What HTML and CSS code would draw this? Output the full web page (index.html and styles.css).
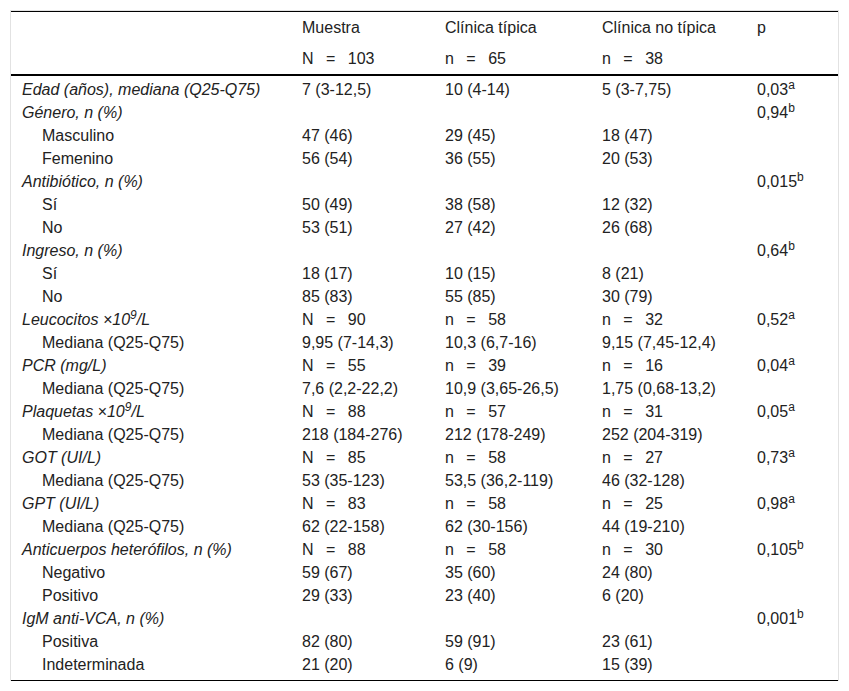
FILE: index.html
```html
<!DOCTYPE html>
<html lang="es">
<head>
<meta charset="utf-8">
<title>Tabla</title>
<link rel="stylesheet" href="styles.css">
</head>
<body>
<div class="frame">
<table class="data">
<colgroup>
<col class="c1"><col class="c2"><col class="c3"><col class="c4"><col class="c5">
</colgroup>
<thead>
<tr class="h1"><th></th><th>Muestra</th><th>Clínica típica</th><th>Clínica no típica</th><th>p</th></tr>
<tr class="h2"><th></th><th class="eq">N = 103</th><th class="eq">n = 65</th><th class="eq">n = 38</th><th></th></tr>
</thead>
<tbody>
<tr><td class="lab">Edad (años), mediana (Q25-Q75)</td><td>7 (3-12,5)</td><td>10 (4-14)</td><td>5 (3-7,75)</td><td>0,03<sup>a</sup></td></tr>
<tr><td class="lab">Género, n (%)</td><td></td><td></td><td></td><td>0,94<sup>b</sup></td></tr>
<tr><td class="sub">Masculino</td><td>47 (46)</td><td>29 (45)</td><td>18 (47)</td><td></td></tr>
<tr><td class="sub">Femenino</td><td>56 (54)</td><td>36 (55)</td><td>20 (53)</td><td></td></tr>
<tr><td class="lab">Antibiótico, n (%)</td><td></td><td></td><td></td><td>0,015<sup>b</sup></td></tr>
<tr><td class="sub">Sí</td><td>50 (49)</td><td>38 (58)</td><td>12 (32)</td><td></td></tr>
<tr><td class="sub">No</td><td>53 (51)</td><td>27 (42)</td><td>26 (68)</td><td></td></tr>
<tr><td class="lab">Ingreso, n (%)</td><td></td><td></td><td></td><td>0,64<sup>b</sup></td></tr>
<tr><td class="sub">Sí</td><td>18 (17)</td><td>10 (15)</td><td>8 (21)</td><td></td></tr>
<tr><td class="sub">No</td><td>85 (83)</td><td>55 (85)</td><td>30 (79)</td><td></td></tr>
<tr><td class="lab">Leucocitos ×10<sup>9</sup>/L</td><td class="eq">N = 90</td><td class="eq">n = 58</td><td class="eq">n = 32</td><td>0,52<sup>a</sup></td></tr>
<tr><td class="sub">Mediana (Q25-Q75)</td><td>9,95 (7-14,3)</td><td>10,3 (6,7-16)</td><td>9,15 (7,45-12,4)</td><td></td></tr>
<tr><td class="lab">PCR (mg/L)</td><td class="eq">N = 55</td><td class="eq">n = 39</td><td class="eq">n = 16</td><td>0,04<sup>a</sup></td></tr>
<tr><td class="sub">Mediana (Q25-Q75)</td><td>7,6 (2,2-22,2)</td><td>10,9 (3,65-26,5)</td><td>1,75 (0,68-13,2)</td><td></td></tr>
<tr><td class="lab">Plaquetas ×10<sup>9</sup>/L</td><td class="eq">N = 88</td><td class="eq">n = 57</td><td class="eq">n = 31</td><td>0,05<sup>a</sup></td></tr>
<tr><td class="sub">Mediana (Q25-Q75)</td><td>218 (184-276)</td><td>212 (178-249)</td><td>252 (204-319)</td><td></td></tr>
<tr><td class="lab">GOT (UI/L)</td><td class="eq">N = 85</td><td class="eq">n = 58</td><td class="eq">n = 27</td><td>0,73<sup>a</sup></td></tr>
<tr><td class="sub">Mediana (Q25-Q75)</td><td>53 (35-123)</td><td>53,5 (36,2-119)</td><td>46 (32-128)</td><td></td></tr>
<tr><td class="lab">GPT (UI/L)</td><td class="eq">N = 83</td><td class="eq">n = 58</td><td class="eq">n = 25</td><td>0,98<sup>a</sup></td></tr>
<tr><td class="sub">Mediana (Q25-Q75)</td><td>62 (22-158)</td><td>62 (30-156)</td><td>44 (19-210)</td><td></td></tr>
<tr><td class="lab">Anticuerpos heterófilos, n (%)</td><td class="eq">N = 88</td><td class="eq">n = 58</td><td class="eq">n = 30</td><td>0,105<sup>b</sup></td></tr>
<tr><td class="sub">Negativo</td><td>59 (67)</td><td>35 (60)</td><td>24 (80)</td><td></td></tr>
<tr><td class="sub">Positivo</td><td>29 (33)</td><td>23 (40)</td><td>6 (20)</td><td></td></tr>
<tr><td class="lab">IgM anti-VCA, n (%)</td><td></td><td></td><td></td><td>0,001<sup>b</sup></td></tr>
<tr><td class="sub">Positiva</td><td>82 (80)</td><td>59 (91)</td><td>23 (61)</td><td></td></tr>
<tr class="last"><td class="sub">Indeterminada</td><td>21 (20)</td><td>6 (9)</td><td>15 (39)</td><td></td></tr>
</tbody>
</table>
</div>
</body>
</html>
```
FILE: styles.css
```css
html, body {
  margin: 0;
  padding: 0;
  background: #fff;
}
body {
  padding: 10px 10px 0 10px;
  font-family: "Liberation Sans", Arial, sans-serif;
  font-size: 16px;
  color: #222;
}
.frame {
  border: 1px solid #e2e2e2;
  border-bottom: none;
  width: 827px;
}
.data {
  border-collapse: collapse;
  width: 827px;
  table-layout: fixed;
  border-top: 1px solid #000;
  border-bottom: 1px solid #000;
}
.c1 { width: 280px; }
.c2 { width: 143px; }
.c3 { width: 157px; }
.c4 { width: 155px; }
.c5 { width: 92px; }
.data th {
  font-weight: normal;
  text-align: left;
  padding: 0 0 0 11px;
  line-height: 19px;
  white-space: nowrap;
}
.h1 th {
  padding-top: 6px;
  padding-bottom: 6px;
}
.h2 th {
  padding-top: 6px;
  padding-bottom: 6px;
  border-bottom: 2px solid #000;
}
.data td {
  padding: 4px 0 0 11px;
  line-height: 19px;
  white-space: nowrap;
  vertical-align: top;
}
.data .last td {
  padding-bottom: 6px;
}
.data td.lab {
  font-style: italic;
}
.data td.sub {
  padding-left: 31px;
}
.eq {
  word-spacing: 8px;
}
sup {
  font-size: 12px;
  line-height: 0;
  vertical-align: 6px;
}
```
